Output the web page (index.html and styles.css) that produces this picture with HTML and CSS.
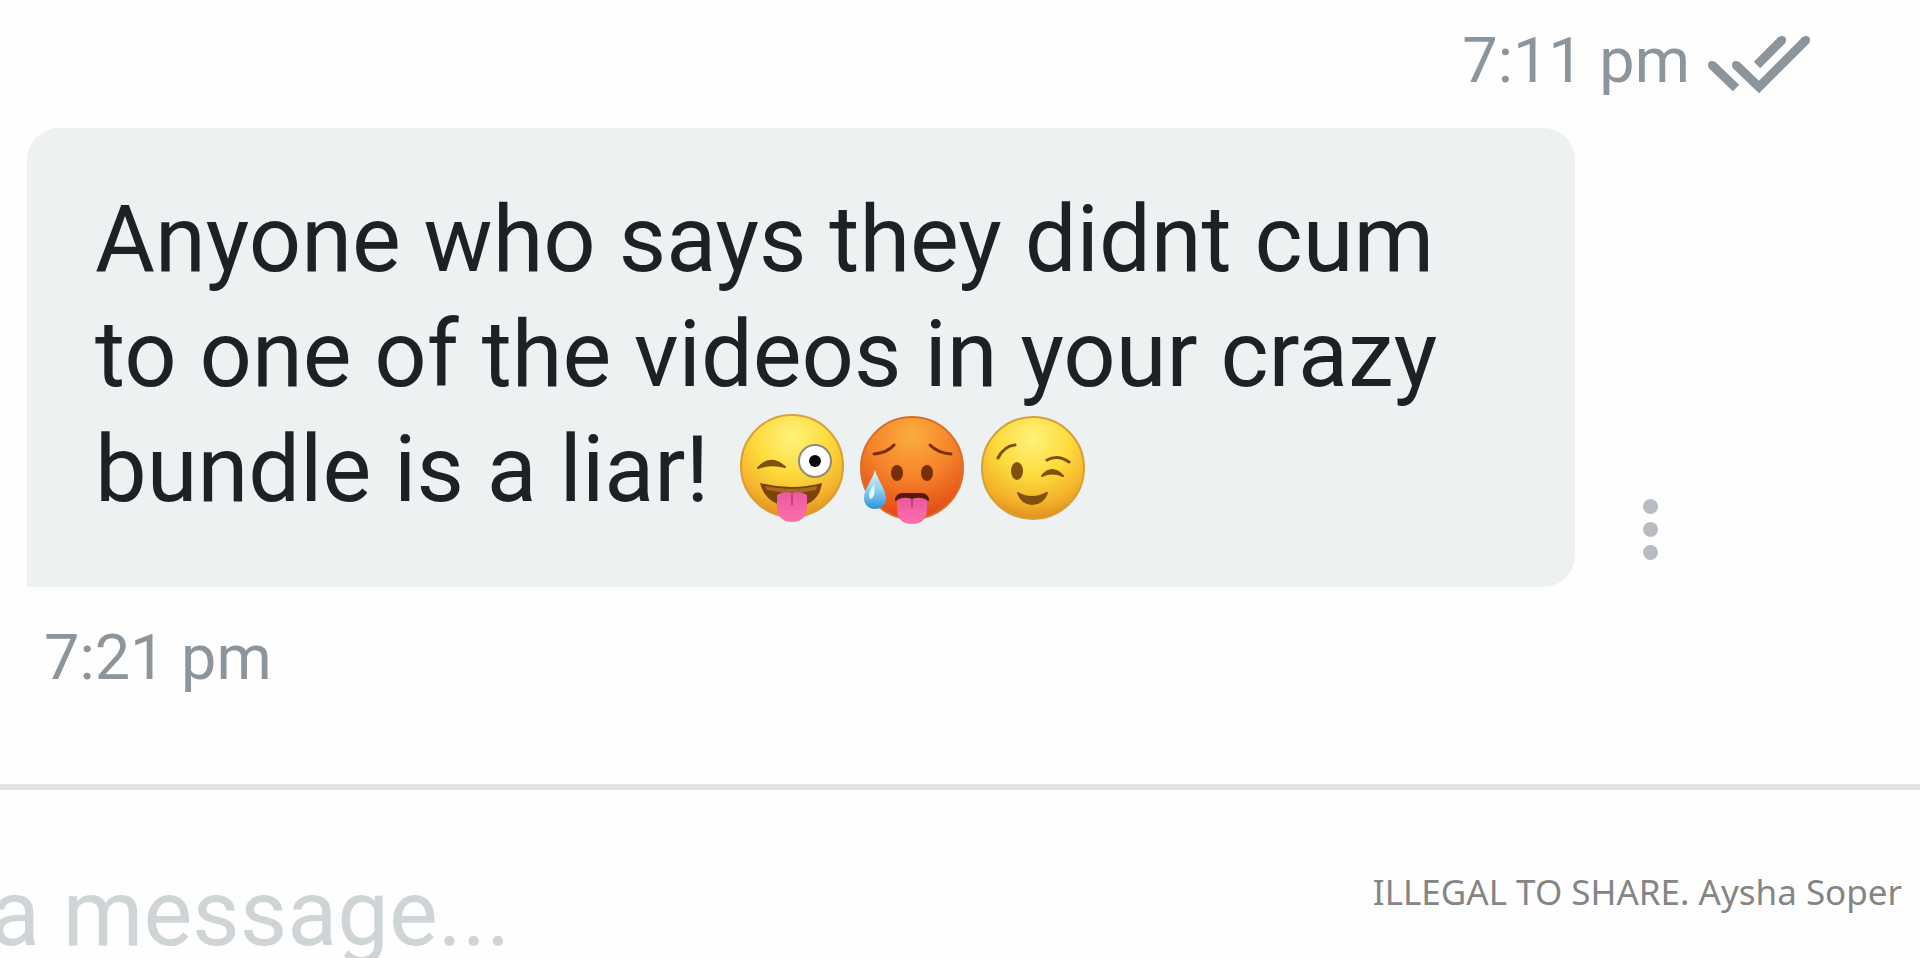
FILE: index.html
```html
<!DOCTYPE html>
<html lang="en">
<head>
    <meta charset="UTF-8">
    <meta name="viewport" content="width=device-width, initial-scale=1.0">
    <title>Messages</title>
    <link rel="stylesheet" href="styles.css">
</head>
<body>

    <main class="chat">
        <div class="sent-status">
            <time datetime="19:11">7:11 pm</time>
            <svg class="ticks" viewBox="0 0 104 60" role="img" aria-label="Read">
                <path d="M4 31 28 54M28 31 51 53 98 6M49 31 74 6" />
                <circle cx="4" cy="31" r="4" />
                <circle cx="28" cy="31" r="4" />
                <circle cx="98" cy="6" r="4" />
                <circle cx="74" cy="6" r="4" />
            </svg>
        </div>

        <div class="message">
            <p class="bubble">Anyone who says they didnt cum<br>
                to one of the videos in your crazy<br>
                bundle is a liar! <span class="emojis"><svg class="emoji" viewBox="0 0 120 120" role="img" aria-label="Winking face with tongue">
                    <defs>
                        <radialGradient id="yellow" cx="50%" cy="22%" r="80%">
                            <stop offset="0" stop-color="#fff27a" />
                            <stop offset=".45" stop-color="#fddb3c" />
                            <stop offset=".8" stop-color="#f3b02a" />
                            <stop offset="1" stop-color="#dc8a1e" />
                        </radialGradient>
                        <radialGradient id="orange" cx="50%" cy="18%" r="85%">
                            <stop offset="0" stop-color="#fbae3c" />
                            <stop offset=".5" stop-color="#f5822a" />
                            <stop offset="1" stop-color="#e04412" />
                        </radialGradient>
                        <linearGradient id="tongue" x1="0" y1="0" x2="0" y2="1">
                            <stop offset="0" stop-color="#e85a9c" />
                            <stop offset="1" stop-color="#ff6fae" />
                        </linearGradient>
                        <linearGradient id="drop" x1="0" y1="0" x2="0" y2="1">
                            <stop offset="0" stop-color="#e4f4fb" />
                            <stop offset=".5" stop-color="#8fd0f0" />
                            <stop offset="1" stop-color="#2b93d6" />
                        </linearGradient>
                    </defs>
                    <circle cx="60" cy="58" r="51" fill="url(#yellow)" stroke="#d6a034" stroke-width="2" />
                    <path d="M26 60Q39 46 53 59Q39 55 26 60Z" fill="#80500c" stroke="#80500c" stroke-width="2" stroke-linejoin="round" />
                    <circle cx="83" cy="53" r="16" fill="#fff" stroke="#8f8b78" stroke-width="2" />
                    <circle cx="83" cy="53" r="6" fill="#090909" />
                    <path d="M28 75Q60 83 90 75Q87 98 60 99Q34 98 28 75Z" fill="#7a430c" />
                    <path d="M33 78Q60 84 85 78L84 82Q60 87 35 82Z" fill="#a86a1c" />
                    <path d="M45 87Q52 82 60 85Q68 82 75 87V99Q74 114 60 114Q46 114 45 99Z" fill="url(#tongue)" />
                    <path d="M60 86V97" stroke="#c83f80" stroke-width="2" />
                </svg><svg class="emoji" viewBox="0 0 120 120" role="img" aria-label="Hot face">
                    <circle cx="60" cy="60" r="51" fill="url(#orange)" stroke="#d8702c" stroke-width="2" />
                    <path d="M22 46Q35 45 42 37M78 37Q86 45 99 46" fill="none" stroke="#7a2e08" stroke-width="3" stroke-linecap="round" />
                    <ellipse cx="45" cy="65" rx="6" ry="8" fill="#7a2e08" />
                    <ellipse cx="75" cy="65" rx="6" ry="8" fill="#7a2e08" />
                    <path d="M43 93Q43 85 51 85H69Q77 85 77 93Q60 89 43 93Z" fill="#571908" />
                    <path d="M45 92Q52 88 60 91Q68 88 75 92V102Q74 116 60 116Q46 116 45 102Z" fill="url(#tongue)" />
                    <path d="M60 91V100" stroke="#c83f80" stroke-width="2" />
                    <path d="M23 62C26 73 34 81 34 90C34 97 29 101 23 101C17 101 12 97 12 90C12 81 20 73 23 62Z" fill="url(#drop)" />
                    <path d="M22 76Q15 86 18 91Q24 90 22 76Z" fill="#e4f6ff" />
                </svg><svg class="emoji" viewBox="0 0 120 120" role="img" aria-label="Winking face">
                    <circle cx="61" cy="60" r="51" fill="url(#yellow)" stroke="#d6a034" stroke-width="2" />
                    <path d="M26 50Q32 38 43 37M75 52Q86 46 97 54" fill="none" stroke="#80500c" stroke-width="3" stroke-linecap="round" />
                    <ellipse cx="45" cy="63" rx="6" ry="9" fill="#80500c" />
                    <path d="M70 68Q80 56 91 68Q80 63 70 68Z" fill="#80500c" stroke="#80500c" stroke-width="2" stroke-linejoin="round" />
                    <path d="M46 85Q60 93 75 85Q71 96 60 96Q50 96 46 85Z" fill="#80500c" stroke="#80500c" stroke-width="2" stroke-linejoin="round" />
                </svg></span>
            </p>
            <button type="button" class="more" aria-label="More options">
                <span class="dot"></span>
                <span class="dot"></span>
                <span class="dot"></span>
            </button>
        </div>

        <time class="received-time" datetime="19:21">7:21 pm</time>
    </main>

    <form class="composer">
        <input class="composer-input" type="text" aria-label="Message" placeholder="a message...">
    </form>

    <div class="watermark">ILLEGAL TO SHARE. Aysha Soper</div>

</body>
</html>
```
FILE: styles.css
```css
* {
    box-sizing: border-box;
}
body {
    display: flex;
    flex-direction: column;
    position: relative;
    height: 100vh;
    margin: 0;
    overflow: hidden;
    background-color: #fefefe;
    color: #1c2224;
    font-family: Roboto, Arial, sans-serif;
}
.chat {
    flex: 1;
    display: flex;
    flex-direction: column;
    padding: 25px 108px 0 27px;
}
.sent-status,
.received-time {
    color: #8b959b;
    font-size: 63px;
    line-height: 72px;
}
.sent-status {
    display: flex;
    justify-content: flex-end;
    gap: 18px;
    margin-bottom: 31px;
}
.ticks {
    width: 104px;
    height: 60px;
    margin-top: 9px;
    overflow: visible;
}
.ticks path {
    fill: none;
    stroke: #8b959b;
    stroke-width: 9;
}
.ticks circle {
    fill: #8b959b;
}
.message {
    display: flex;
    align-items: flex-end;
    gap: 58px;
}
.bubble {
    flex: 0 1 1548px;
    margin: 0;
    padding: 54px 68px 60px;
    border-radius: 32px 32px 32px 0;
    background-color: #edf1f2;
    font-size: 92px;
    line-height: 115px;
}
.emojis {
    white-space: nowrap;
}
.emoji {
    width: 120px;
    height: 120px;
    margin: -16px 0;
    vertical-align: -11px;
}
.more {
    display: flex;
    flex-direction: column;
    gap: 8px;
    margin-bottom: 17px;
    padding: 10px;
    border: none;
    background: none;
    cursor: pointer;
}
.dot {
    width: 15px;
    height: 15px;
    border-radius: 50%;
    background-color: #b6bcc1;
}
.received-time {
    margin: 35px 0 0 17px;
}
.composer {
    height: 174px;
    padding-top: 69px;
    border-top: 6px solid #e3e3e3;
    overflow: hidden;
}
.composer-input {
    width: 100%;
    height: 108px;
    margin-left: -10px;
    padding: 0;
    border: none;
    outline: none;
    background: none;
    color: #1c2224;
    font-family: inherit;
    font-size: 92px;
}
.composer-input::placeholder {
    color: #cfd4d7;
    opacity: 1;
}
/* Sits on top of the composer */
.watermark {
    position: absolute;
    right: 18px;
    bottom: 42px;
    color: #858585;
    font-family: "Noto Sans", sans-serif;
    font-size: 35px;
    line-height: 48px;
}
```
